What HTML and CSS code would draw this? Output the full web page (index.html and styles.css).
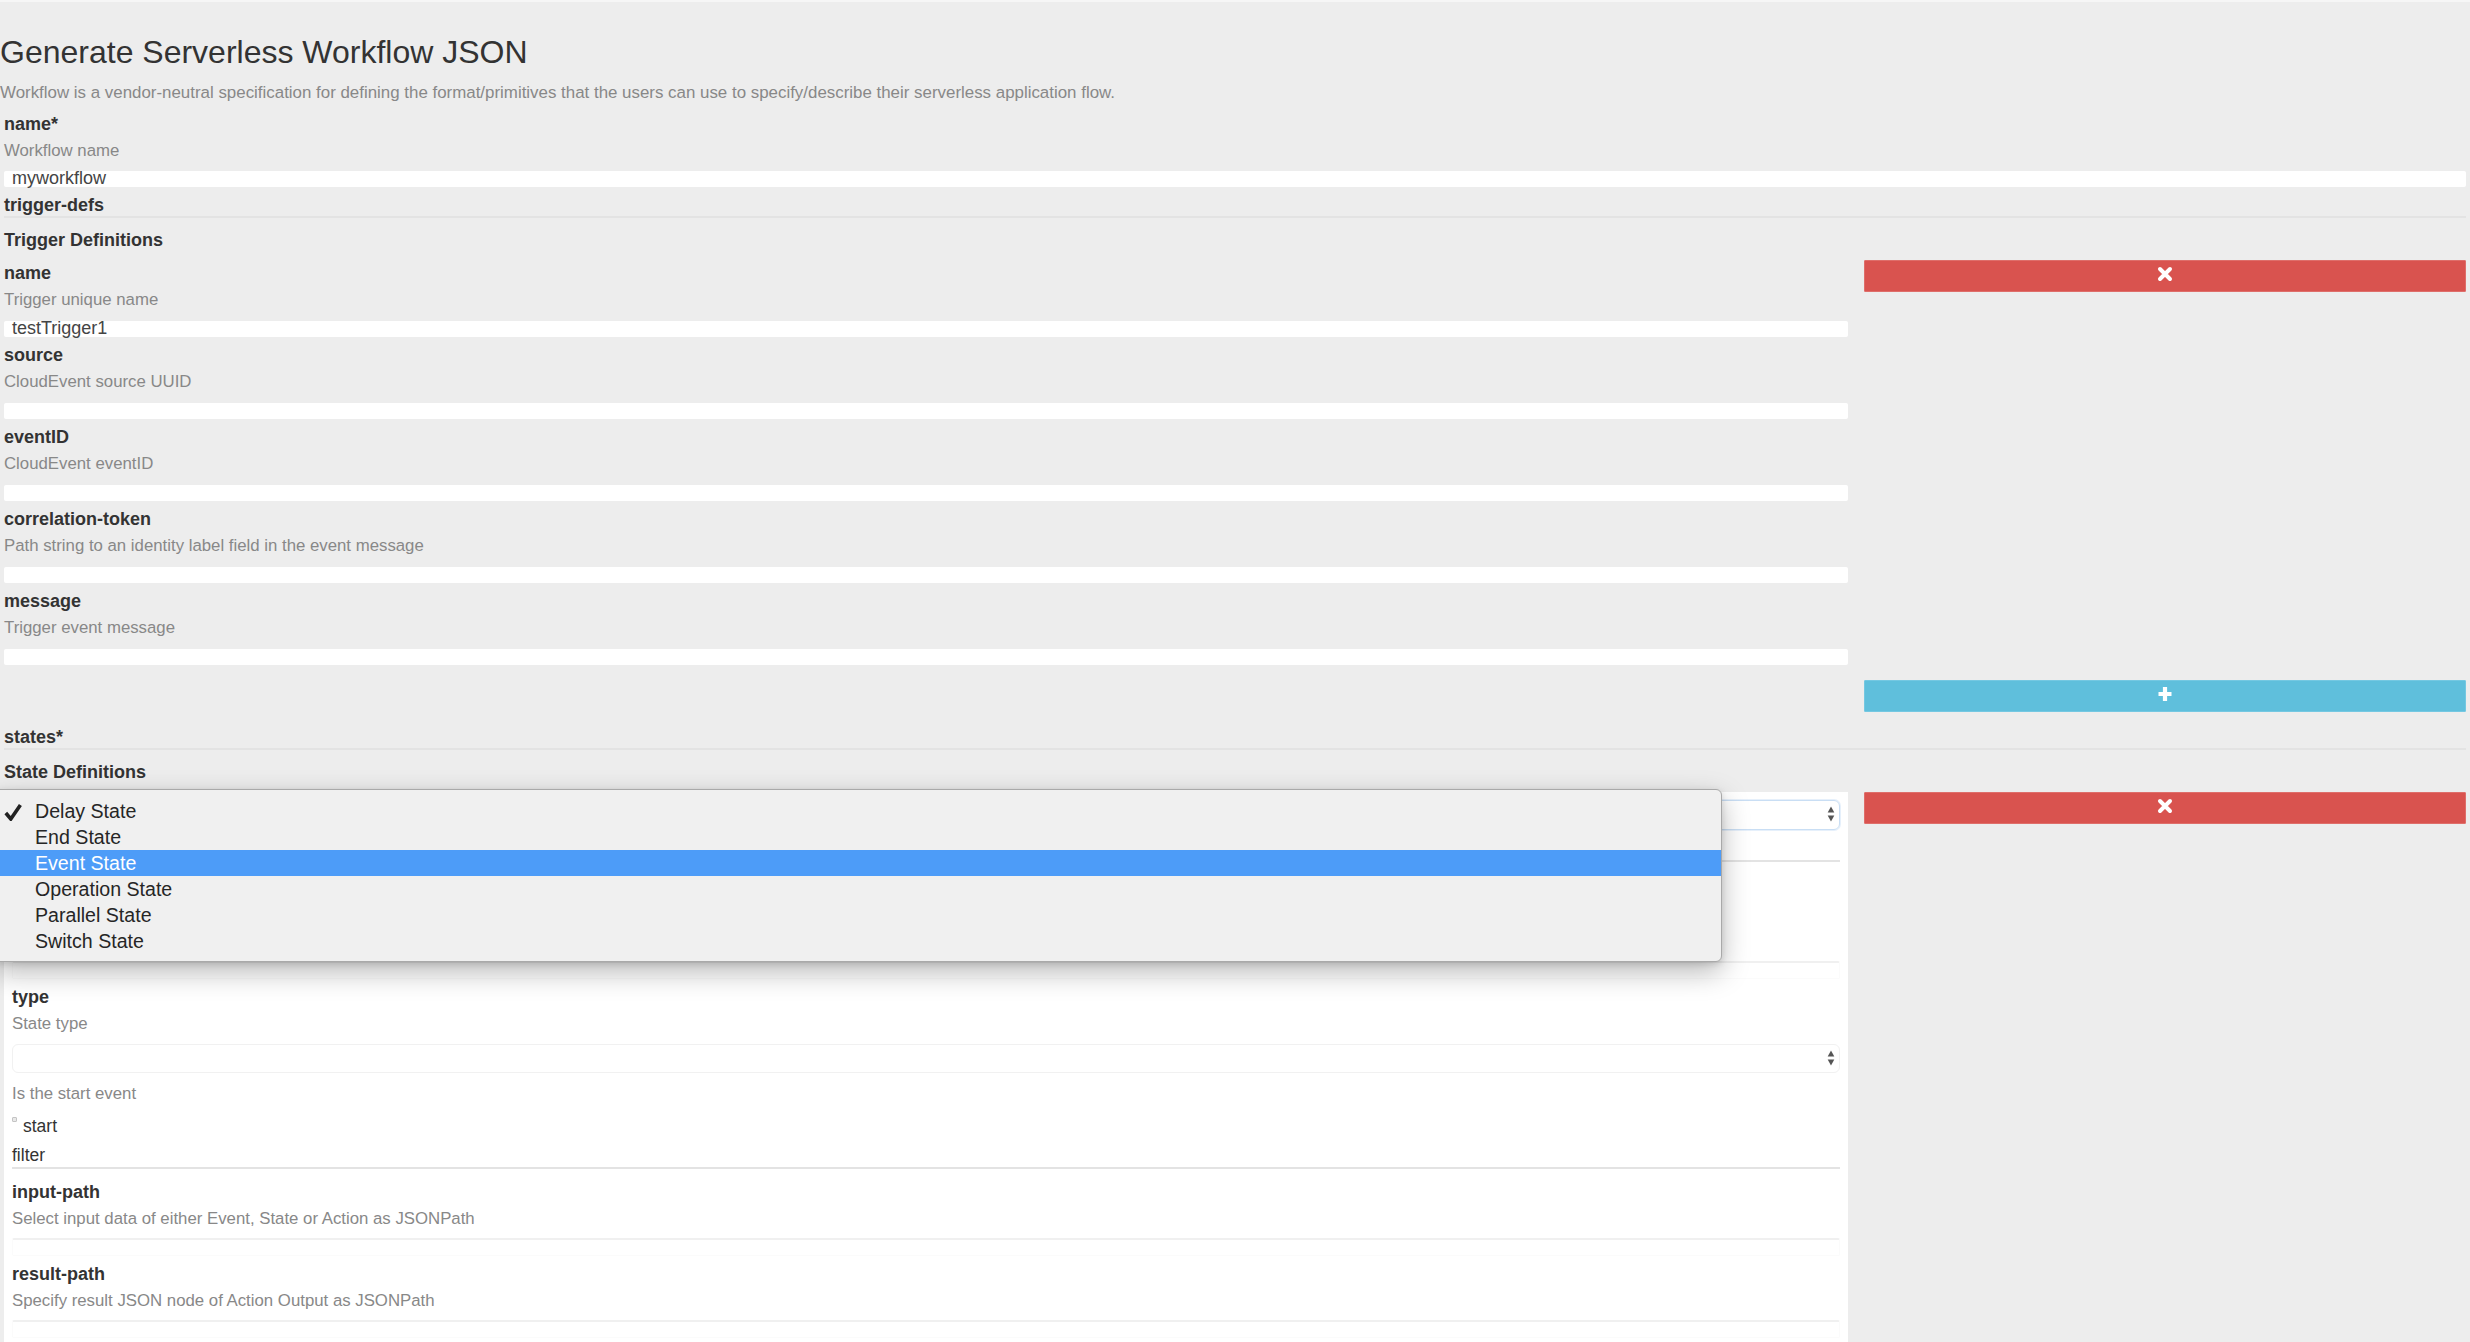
FILE: index.html
```html
<!DOCTYPE html>
<html lang="en">
<head>
<meta charset="utf-8">
<title>Generate Serverless Workflow JSON</title>
<link rel="stylesheet" href="styles.css">
</head>
<body>
<div class="page">
  <h1 class="title">Generate Serverless Workflow JSON</h1>
  <p class="intro">Workflow is a vendor-neutral specification for defining the format/primitives that the users can use to specify/describe their serverless application flow.</p>

  <form class="form">
    <div class="field">
      <div class="label">name*</div>
      <div class="desc">Workflow name</div>
      <div class="input"><span class="input-text">myworkflow</span></div>
    </div>

    <div class="legend">trigger-defs</div>
    <div class="subhead">Trigger Definitions</div>

    <div class="item">
      <div class="item-main">
        <div class="field">
          <div class="label">name</div>
          <div class="desc">Trigger unique name</div>
          <div class="input"><span class="input-text">testTrigger1</span></div>
        </div>
        <div class="field">
          <div class="label">source</div>
          <div class="desc">CloudEvent source UUID</div>
          <div class="input"></div>
        </div>
        <div class="field">
          <div class="label">eventID</div>
          <div class="desc">CloudEvent eventID</div>
          <div class="input"></div>
        </div>
        <div class="field">
          <div class="label">correlation-token</div>
          <div class="desc">Path string to an identity label field in the event message</div>
          <div class="input"></div>
        </div>
        <div class="field">
          <div class="label">message</div>
          <div class="desc">Trigger event message</div>
          <div class="input"></div>
        </div>
      </div>
      <div class="item-side">
        <button type="button" class="btn btn-danger" aria-label="remove">
          <svg class="ico" viewBox="0 0 16 16" width="16" height="16"><path d="M3 3 L13 13 M13 3 L3 13" stroke="#fff" stroke-width="4" stroke-linecap="round" fill="none"/></svg>
        </button>
      </div>
    </div>

    <div class="item add-row">
      <div class="item-main"></div>
      <div class="item-side">
        <button type="button" class="btn btn-info" aria-label="add">
          <svg class="ico" viewBox="0 0 16 16" width="16" height="16"><path d="M8 1 V15 M1.5 8 H14.5" stroke="#fff" stroke-width="4.2" fill="none"/></svg>
        </button>
      </div>
    </div>

    <div class="legend legend-states">states*</div>
    <div class="subhead">State Definitions</div>

    <div class="item">
      <div class="item-main well">
        <div class="select select-focus">
          <svg class="arrows" viewBox="0 0 8 18" width="8" height="17"><polygon points="4,0.5 7.5,7 0.5,7" fill="#555"/><polygon points="0.5,10 7.5,10 4,16.5" fill="#555"/></svg>
        </div>
        <div class="legend legend-inner"></div>
        <div class="field field-hidden">
          <div class="label"></div>
          <div class="desc"></div>
          <div class="input input-plain"></div>
        </div>
        <div class="field">
          <div class="label">type</div>
          <div class="desc">State type</div>
          <div class="select select-plain">
            <svg class="arrows" viewBox="0 0 8 18" width="8" height="17"><polygon points="4,0.5 7.5,7 0.5,7" fill="#555"/><polygon points="0.5,10 7.5,10 4,16.5" fill="#555"/></svg>
          </div>
        </div>
        <div class="desc desc-start">Is the start event</div>
        <div class="check-row"><span class="checkbox"></span><span class="check-label">start</span></div>
        <div class="legend legend-plain">filter</div>
        <div class="field field-first">
          <div class="label">input-path</div>
          <div class="desc">Select input data of either Event, State or Action as JSONPath</div>
          <div class="input input-plain"></div>
        </div>
        <div class="field">
          <div class="label">result-path</div>
          <div class="desc">Specify result JSON node of Action Output as JSONPath</div>
          <div class="input input-plain"></div>
        </div>
      </div>
      <div class="item-side">
        <button type="button" class="btn btn-danger" aria-label="remove">
          <svg class="ico" viewBox="0 0 16 16" width="16" height="16"><path d="M3 3 L13 13 M13 3 L3 13" stroke="#fff" stroke-width="4" stroke-linecap="round" fill="none"/></svg>
        </button>
      </div>
    </div>
  </form>

  <ul class="dropdown">
    <li class="opt opt-checked">
      <svg class="check" viewBox="0 0 18 18" width="18" height="18"><path d="M1.8 10 L6.8 16 L16.4 2" stroke="#222" stroke-width="3.6" stroke-linejoin="miter" fill="none"/></svg>
      Delay State
    </li>
    <li class="opt">End State</li>
    <li class="opt opt-active">Event State</li>
    <li class="opt">Operation State</li>
    <li class="opt">Parallel State</li>
    <li class="opt">Switch State</li>
  </ul>
</div>
</body>
</html>
```

FILE: styles.css
```css
html, body {
  margin: 0;
  padding: 0;
  height: 1342px;
  overflow: hidden;
  background: #ededed;
}

.page {
  position: relative;
  border-top: 2px solid #f6f6f6;
  font-family: "Liberation Sans", Arial, Helvetica, sans-serif;
  color: #333;
}

.title {
  margin: 32px 0 0 0;
  font-size: 32px;
  line-height: 36px;
  font-weight: normal;
  color: #333;
}

.intro {
  margin: 11px 0 0 0;
  font-size: 16.9px;
  line-height: 24px;
  color: #888;
}

.form {
  margin-top: 6px;
  padding: 0 4px;
}

.field {
  display: flex;
  flex-direction: column;
  margin-bottom: 5px;
}

.label {
  font-size: 18px;
  line-height: 26px;
  height: 26px;
  font-weight: bold;
  color: #333;
}

.desc {
  font-size: 16.8px;
  line-height: 28px;
  height: 28px;
  color: #888;
}

.input {
  margin-top: 7px;
  height: 16px;
  background: #fff;
  border-radius: 2px;
  padding-left: 8px;
  font-size: 18px;
  line-height: 15px;
  color: #444;
}

.form > .field .input {
  margin-top: 6px;
}

.legend {
  margin-top: 8px;
  font-size: 18px;
  line-height: 21px;
  height: 21px;
  font-weight: bold;
  color: #333;
  border-bottom: 2px solid #e3e3e3;
}

.legend-states {
  margin-top: 15px;
}

.subhead {
  margin-top: 9px;
  font-size: 18px;
  line-height: 26px;
  height: 26px;
  font-weight: bold;
  color: #333;
}

.item {
  display: grid;
  grid-template-columns: 1fr 602px;
  column-gap: 16px;
  margin-top: 7px;
  align-items: start;
}

.add-row {
  margin-top: 10px;
}

.item-side {
  display: flex;
}

.btn {
  flex: 1;
  height: 32px;
  margin: 0;
  padding: 0;
  border: 1px solid;
  border-radius: 1px;
  display: flex;
  align-items: center;
  justify-content: center;
  cursor: pointer;
}

.btn-danger {
  background: #d9534f;
  border-color: #df6e6a;
}

.btn-info {
  background: #5fbfdc;
  border-color: #74c8e2;
}

.ico {
  display: block;
  margin-top: -5px;
}

/* state panel */
.well {
  background: #fff;
  padding: 8px 8px 0 8px;
  min-height: 560px;
}

.select {
  position: relative;
  height: 30px;
  box-sizing: border-box;
  border-radius: 6px;
}

.select-focus {
  border: 1px solid #c9def4;
  box-shadow: 0 0 0 1px #e6f0fb;
}

.select-plain {
  margin-top: 6px;
  height: 29px;
  border: 1px solid #f1f1f1;
}

.arrows {
  position: absolute;
  right: 4px;
  top: 5px;
}

.legend-inner {
  margin-top: 9px;
}

.field-hidden {
  margin-top: 40px;
}

.well .input {
  margin-top: 5px;
}

.input-plain {
  height: 18px;
  box-sizing: border-box;
  border: 1px solid #fbfbfb;
  border-top: 2px solid #f0f0f0;
  border-radius: 2px;
}

.desc-start {
  margin-top: 7px;
}

.check-row {
  margin-top: 4px;
  display: flex;
  align-items: flex-start;
  gap: 6px;
  height: 28px;
}

.checkbox {
  width: 5px;
  height: 5px;
  margin-top: 5px;
  box-sizing: border-box;
  border: 1px solid #c4c4c4;
  background: #e9e9e9;
  border-radius: 1px;
}

.check-label {
  font-size: 17.5px;
  line-height: 28px;
  color: #333;
}

.legend-plain {
  margin-top: 3px;
  font-size: 17.5px;
  font-weight: normal;
  line-height: 24px;
  height: 24px;
}

.field-first {
  margin-top: 10px;
}

/* native select popup drawn over the form */
.dropdown {
  position: absolute;
  left: -6px;
  top: 787px;
  width: 1728px;
  box-sizing: border-box;
  margin: 0;
  padding: 8px 0 7px 0;
  list-style: none;
  background: #f0f0f0;
  border: 1px solid #a9a9a9;
  border-radius: 6px;
  box-shadow: 0 10px 28px rgba(0, 0, 0, 0.28), 0 2px 6px rgba(0, 0, 0, 0.12);
}

.opt {
  position: relative;
  height: 26px;
  line-height: 26px;
  padding-left: 40px;
  font-size: 19.6px;
  color: #262626;
}

.opt-active {
  background: #4d9cf8;
  color: #fff;
}

.check {
  position: absolute;
  left: 9px;
  top: 5px;
}
```
